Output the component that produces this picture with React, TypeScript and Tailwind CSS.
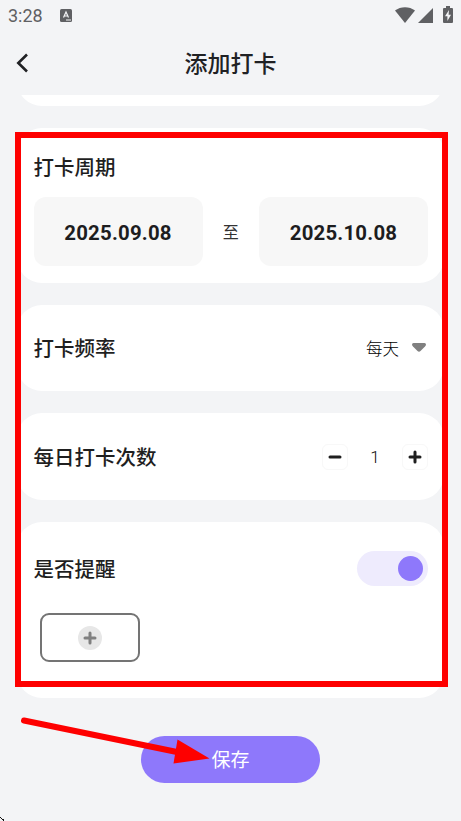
import type { ReactNode } from "react";
import clsx from "clsx";

interface CardProps {
  className?: string;
  children?: ReactNode;
}

const Card = ({ className, children }: CardProps) => (
  <section className={clsx("shrink-0 rounded-[25px] bg-white pr-4 pl-[16.5px]", className)}>
    {children}
  </section>
);

const Label = ({ children }: { children: ReactNode }) => (
  <h2 className="pt-0.5 text-[20.5px] leading-[30px] font-medium text-[#1f1f1f]">{children}</h2>
);

const DateBox = ({ value }: { value: string }) => (
  <button className="h-[69px] w-[169px] rounded-xl bg-[#f7f7f7] pt-[3px] text-[20.4px] font-bold tracking-[0.2px] text-[#1d1d1f]">
    {value}
  </button>
);

const StatusBar = () => (
  <div className="flex h-8 items-center justify-between pr-2 pl-2 text-[#5f6063]">
    <div className="flex items-center gap-[17px]">
      <span className="text-[18px] leading-8">3:28</span>
      <svg className="mb-px h-[13px] w-3" viewBox="0 0 12 13">
        <rect width="12" height="13" rx="1.5" fill="currentColor" />
        <path d="M3.5 8.5 6 3l2.5 5.5M4.5 7h3M6 11h5" fill="none" stroke="#f3f4f6" strokeWidth="1.2" />
      </svg>
    </div>
    <div className="flex items-end pb-[3px]">
      <svg className="mr-[3px] h-4 w-5" viewBox="0 0 20 16" fill="currentColor">
        <path d="M0 3.5C5.5-1 14.5-1 20 3.5L10 16z" />
      </svg>
      <svg className="mr-2.5 h-[15px] w-[15px]" viewBox="0 0 15 15" fill="currentColor">
        <path d="M15 0v15H0z" />
      </svg>
      <svg className="h-[17px] w-2.5" viewBox="0 0 10 17">
        <path
          d="M3 0h4v2h2a1 1 0 0 1 1 1v13a1 1 0 0 1-1 1H1a1 1 0 0 1-1-1V3a1 1 0 0 1 1-1h2z"
          fill="currentColor"
        />
        <path d="M6 4 2 10.2h2.4V15L8 8.7H5.6z" fill="#f3f4f6" />
      </svg>
    </div>
  </div>
);

const Header = () => (
  <header className="flex h-[63px] items-center pl-4">
    <svg className="mb-0.5 h-5 w-3" viewBox="0 0 12 20" fill="none" stroke="#202124" strokeWidth="2.6">
      <path d="m11 1.5-8.7 8.5L11 18.5" />
    </svg>
    <h1 className="mr-7 flex-1 pt-[3px] text-center text-[23px] font-medium text-[#202124]">添加打卡</h1>
  </header>
);

const Stepper = () => (
  <div className="flex items-center">
    <button className="flex size-[26px] items-center justify-center rounded-md border border-[#f8f8f8]">
      <svg className="size-[14px]" viewBox="0 0 14 14" stroke="#1f1f1f" strokeWidth="3" strokeLinecap="round">
        <path d="M2 7h10" />
      </svg>
    </button>
    <span className="w-[54px] pt-0.5 text-center text-[17px] font-light text-[#111]">1</span>
    <button className="flex size-[26px] items-center justify-center rounded-md border border-[#f8f8f8]">
      <svg className="size-[14px]" viewBox="0 0 14 14" stroke="#1f1f1f" strokeWidth="3" strokeLinecap="round">
        <path d="M2 7h10M7 2v10" />
      </svg>
    </button>
  </div>
);

export default function App() {
  return (
    <div className="relative flex h-[821px] w-[461px] flex-col overflow-hidden bg-[#f3f4f6] font-[Roboto,'Noto_Sans_CJK_SC',sans-serif]">
      <StatusBar />
      <Header />

      <main className="flex h-[603px] flex-col gap-[22px] overflow-hidden px-[17px]">
        <Card className="-mt-[49px] h-[60px]" />

        <Card className="h-[154.5px] pt-[23px]">
          <Label>打卡周期</Label>
          <div className="mt-3.5 flex items-center justify-between">
            <DateBox value="2025.09.08" />
            <span className="pt-0.5 text-[16px] text-[#333]">至</span>
            <DateBox value="2025.10.08" />
          </div>
        </Card>

        <Card className="flex h-[86.5px] items-center justify-between">
          <Label>打卡频率</Label>
          <div className="flex items-center gap-[13px] pr-0.5">
            <span className="pt-1.5 text-[16.5px] font-light text-black">每天</span>
            <svg className="h-[9px] w-[14px]" viewBox="0 0 14 9" fill="#808080">
              <path d="M1.5 0h11Q14 0 14 1.5 14 2.5 13 3.5L8.5 8Q7 9.3 5.5 8L1 3.5Q0 2.5 0 1.5 0 0 1.5 0" />
            </svg>
          </div>
        </Card>

        <Card className="flex h-[87px] items-center justify-between">
          <Label>每日打卡次数</Label>
          <Stepper />
        </Card>

        <Card className="h-[176px] pt-[29px]">
          <div className="flex items-center justify-between">
            <Label>是否提醒</Label>
            <div className="flex h-[35px] w-[71px] items-center justify-end rounded-full bg-[#eeebfd] pr-[5px]">
              <div className="size-[25px] rounded-full bg-[#8e78fb]" />
            </div>
          </div>
          <button className="mt-[27px] ml-1.5 flex h-[49px] w-[100px] items-center justify-center rounded-[9px] border-2 border-[#747474]">
            <svg className="size-6" viewBox="0 0 24 24">
              <circle cx="12" cy="12" r="12" fill="#e7e7e7" />
              <path d="M7 12h10M12 7v10" stroke="#808080" strokeWidth="3" strokeLinecap="round" />
            </svg>
          </button>
        </Card>
      </main>

      <button className="mt-[38px] ml-[141px] h-[47px] w-[179px] rounded-full bg-[#8e78fb] pt-1 text-[19px] text-white">
        保存
      </button>

      {/* Guide marks */}
      <div className="pointer-events-none absolute top-[132px] left-[15px] h-[555px] w-[433px] border-[6px] border-[#fe0000]" />
      <svg className="pointer-events-none absolute top-[710px] left-[15px] h-[60px] w-[200px]" viewBox="0 0 200 60">
        <path d="M9 10.5 162 42" stroke="#fe0000" strokeWidth="6" strokeLinecap="round" />
        <path d="M162.5 29.5 194.5 48.5 158.5 53.5z" fill="#fe0000" />
      </svg>
      <svg className="pointer-events-none absolute bottom-0 left-0 h-[5px] w-1" viewBox="0 0 4 5">
        <path d="M0 1h1v1H0zM1 2h1v1H1zM2 3h2v1H2zM3 4h1v1H3z" fill="#111" />
      </svg>
    </div>
  );
}
